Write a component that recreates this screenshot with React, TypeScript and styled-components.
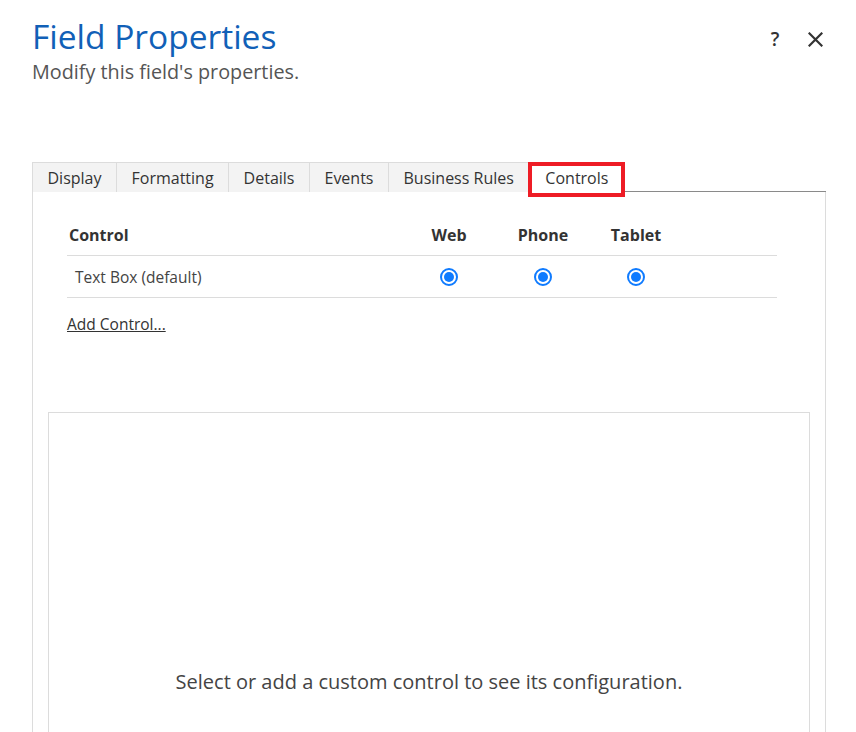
import React from "react";
import styled, { createGlobalStyle } from "styled-components";

const Global = createGlobalStyle`
  html, body { margin: 0; padding: 0; background: #fff; }
  body { font-family: "Open Sans", "Noto Sans", sans-serif; color: #333; overflow: hidden; }
`;

const Page = styled.div`
  width: 856px;
  height: 732px;
  box-sizing: border-box;
  padding: 0 30px 0 32px;
  display: flex;
  flex-direction: column;
  overflow: hidden;
`;

const Header = styled.header`
  display: flex;
  justify-content: space-between;
  align-items: flex-start;
  height: 162px;
`;

const TitleBlock = styled.div`
  display: flex;
  flex-direction: column;
  padding-top: 13px;
`;

const Title = styled.h1`
  margin: 0;
  font-size: 33.5px;
  line-height: 46px;
  font-weight: 400;
  color: #1160b7;
`;

const Subtitle = styled.p`
  margin: 0;
  font-size: 19.8px;
  line-height: 26px;
  color: #555;
`;

const HeaderActions = styled.div`
  display: flex;
  gap: 22px;
  align-items: center;
  padding-top: 28px;
  padding-right: 2px;
`;

const IconButton = styled.button`
  border: 0;
  background: none;
  padding: 0;
  width: 18px;
  height: 22px;
  display: flex;
  align-items: center;
  justify-content: center;
  color: #333;
  font-family: "Open Sans", sans-serif;
  font-size: 19px;
  font-weight: 600;
  cursor: pointer;
`;

const TabRow = styled.div`
  display: flex;
  align-items: flex-start;
  height: 30px;
  overflow: visible;
  position: relative;
  z-index: 1;
`;

const Tab = styled.div<{ $active?: boolean }>`
  height: ${(p) => (p.$active ? "35px" : "30px")};
  box-sizing: border-box;
  padding: 0 ${(p) => (p.$active ? "13px" : "14.5px")};
  display: flex;
  align-items: center;
  font-size: 16px;
  color: #333;
  background: ${(p) => (p.$active ? "#fff" : "#f3f3f3")};
  border-left: ${(p) => (p.$active ? "4px solid #ee1c25" : "1px solid #dcdcdc")};
  border-top: ${(p) => (p.$active ? "4px solid #ee1c25" : "1px solid #dcdcdc")};
  border-right: ${(p) => (p.$active ? "4px solid #ee1c25" : "none")};
  border-bottom: ${(p) => (p.$active ? "4px solid #ee1c25" : "none")};
  padding-bottom: ${(p) => (p.$active ? "3px" : "0")};
  white-space: nowrap;
`;

const TabFiller = styled.div`
  flex: 1;
  height: 30px;
  box-sizing: border-box;
  border-bottom: 1px solid #8a8a8a;
`;

const Panel = styled.section`
  flex: 1;
  border-left: 1px solid #dcdcdc;
  border-right: 1px solid #dcdcdc;
  display: flex;
  flex-direction: column;
  padding: 22px 15px 0 15px;
`;

const Table = styled.div`
  margin-left: 19px;
  width: 710px;
  display: flex;
  flex-direction: column;
`;

const Row = styled.div`
  display: grid;
  grid-template-columns: 336px 92px 96px 90px 1fr;
  align-items: center;
  height: 41px;
  border-bottom: 1px solid #dcdcdc;
`;

const HeadCell = styled.div<{ $center?: boolean }>`
  font-size: 16px;
  font-weight: 700;
  color: #333;
  padding-left: ${(p) => (p.$center ? "0" : "2px")};
  text-align: ${(p) => (p.$center ? "center" : "left")};
`;

const NameCell = styled.div`
  font-size: 15.5px;
  color: #444;
  padding-left: 8px;
`;

const RadioCell = styled.div`
  display: flex;
  justify-content: center;
`;

const Radio = styled.span`
  width: 18px;
  height: 18px;
  box-sizing: border-box;
  border-radius: 50%;
  border: 2px solid #0f7bff;
  display: flex;
  align-items: center;
  justify-content: center;
  &::after {
    content: "";
    width: 10px;
    height: 10px;
    border-radius: 50%;
    background: #0f7bff;
  }
`;

const AddLink = styled.a`
  margin: 15px 0 0 19px;
  align-self: flex-start;
  font-size: 15.5px;
  line-height: 22px;
  color: #333;
  text-decoration: underline;
  cursor: pointer;
`;

const ConfigBox = styled.div`
  margin-top: 77px;
  flex: 1;
  border: 1px solid #dcdcdc;
  border-bottom: none;
  display: flex;
  align-items: flex-end;
  justify-content: center;
  padding-bottom: 37px;
`;

const Placeholder = styled.p`
  margin: 0;
  font-size: 20px;
  color: #444;
`;

const tabs = ["Display", "Formatting", "Details", "Events", "Business Rules", "Controls"];

export default function App() {
  return (
    <>
      <Global />
      <Page>
        <Header>
          <TitleBlock>
            <Title>Field Properties</Title>
            <Subtitle>Modify this field's properties.</Subtitle>
          </TitleBlock>
          <HeaderActions>
            <IconButton aria-label="Help">?</IconButton>
            <IconButton aria-label="Close">
              <svg width="15" height="15" viewBox="0 0 15 15">
                <path d="M1.5 1.5 L13.5 13.5 M13.5 1.5 L1.5 13.5" stroke="#333" strokeWidth="2.2" strokeLinecap="square" />
              </svg>
            </IconButton>
          </HeaderActions>
        </Header>
        <TabRow>
          {tabs.map((t) => (
            <Tab key={t} $active={t === "Controls"}>
              {t}
            </Tab>
          ))}
          <TabFiller />
        </TabRow>
        <Panel>
          <Table>
            <Row>
              <HeadCell>Control</HeadCell>
              <HeadCell $center>Web</HeadCell>
              <HeadCell $center>Phone</HeadCell>
              <HeadCell $center>Tablet</HeadCell>
              <div />
            </Row>
            <Row>
              <NameCell>Text Box (default)</NameCell>
              <RadioCell><Radio /></RadioCell>
              <RadioCell><Radio /></RadioCell>
              <RadioCell><Radio /></RadioCell>
              <div />
            </Row>
          </Table>
          <AddLink>Add Control...</AddLink>
          <ConfigBox>
            <Placeholder>Select or add a custom control to see its configuration.</Placeholder>
          </ConfigBox>
        </Panel>
      </Page>
    </>
  );
}
